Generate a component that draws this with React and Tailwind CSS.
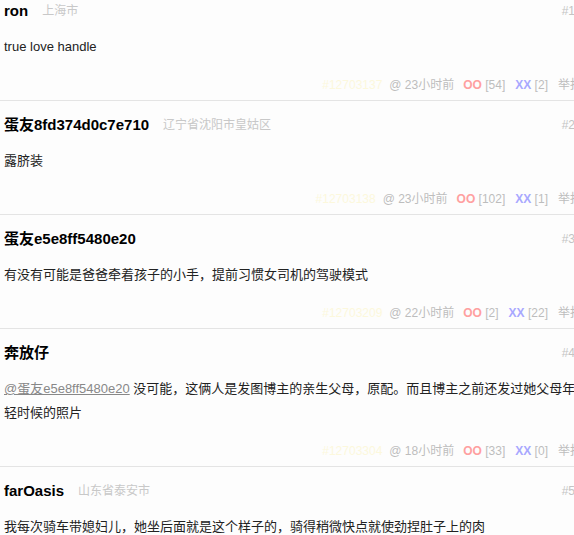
const comments = [
  {
    no: 1,
    name: "ron",
    place: "上海市",
    text: "true love handle",
    id: "#12703137",
    time: "23小时前",
    oo: 54,
    xx: 2,
  },
  {
    no: 2,
    name: "蛋友8fd374d0c7e710",
    place: "辽宁省沈阳市皇姑区",
    text: "露脐装",
    id: "#12703138",
    time: "23小时前",
    oo: 102,
    xx: 1,
  },
  {
    no: 3,
    name: "蛋友e5e8ff5480e20",
    text: "有没有可能是爸爸牵着孩子的小手，提前习惯女司机的驾驶模式",
    id: "#12703209",
    time: "22小时前",
    oo: 2,
    xx: 22,
  },
  {
    no: 4,
    name: "奔放仔",
    mention: "@蛋友e5e8ff5480e20",
    text: "没可能，这俩人是发图博主的亲生父母，原配。而且博主之前还发过她父母年轻时候的照片",
    id: "#12703304",
    time: "18小时前",
    oo: 33,
    xx: 0,
  },
  {
    no: 5,
    name: "farOasis",
    place: "山东省泰安市",
    text: "我每次骑车带媳妇儿，她坐后面就是这个样子的，骑得稍微快点就使劲捏肚子上的肉",
    id: "#12703342",
    time: "17小时前",
    oo: 12,
    xx: 1,
  },
];

const Comment = ({ c }) => (
  <li className="border-t border-[#e4e4e4] pt-[14px] pb-[5px] pl-[4px]">
    <div className="flex h-[20px] items-center pr-[15px]">
      <b className="text-[15px] text-black">{c.name}</b>
      {c.place && (
        <span className="ml-[14px] text-[12px] text-[#c8c8c8]">{c.place}</span>
      )}
      <span className="ml-auto text-[12px] text-[#c4c4c4]">#{c.no}</span>
    </div>
    <p className="mt-[14px] pr-[7px] text-[13px] leading-[24px] text-[#222]">
      {c.mention && (
        <>
          <a href="#" className="text-[#888] underline">
            {c.mention}
          </a>{" "}
        </>
      )}
      {c.text}
    </p>
    <div className="mt-[16px] flex h-[20px] items-center justify-end pr-[8px] text-[12px] text-[#bdbdbd]">
      <span className="text-[#fcf8dc]">{c.id}</span>
      <span className="ml-[7px]">@ {c.time}</span>
      <span className="ml-[9px]">
        <b className="text-[#ffa0a0]">OO</b> [{c.oo}]
      </span>
      <span className="ml-[10px]">
        <b className="text-[#a8a8ff]">XX</b> [{c.xx}]
      </span>
      <span className="ml-[10px]">举报</span>
    </div>
  </li>
);

export default function App() {
  return (
    <div
      className="h-[535px] w-full overflow-hidden bg-[#fdfdfd]"
      style={{ fontFamily: '"Liberation Sans", Arial, "Noto Sans CJK SC", sans-serif' }}
    >
      <ol className="-mt-[14px] w-[590px]">
        {comments.map((c) => (
          <Comment key={c.no} c={c} />
        ))}
      </ol>
    </div>
  );
}
